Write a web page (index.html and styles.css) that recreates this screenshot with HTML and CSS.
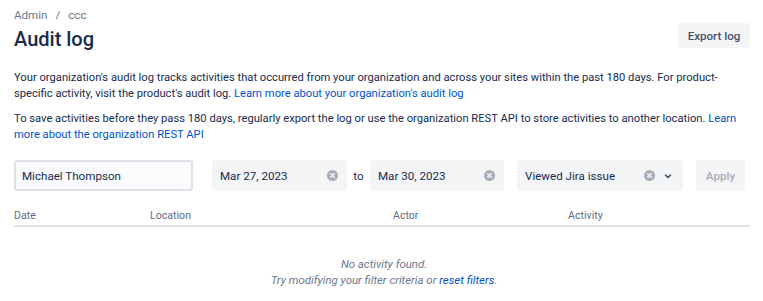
FILE: index.html
```html
<!DOCTYPE html>
<html>
<head>
<meta charset="utf-8">
<link rel="stylesheet" href="styles.css">
</head>
<body>
<div class="page">
  <div class="header">
    <div class="header-left">
      <nav class="crumbs"><span>Admin</span><span class="sep">/</span><span>ccc</span></nav>
      <h1 class="title">Audit log</h1>
    </div>
    <button class="btn export">Export log</button>
  </div>
  <p class="desc">Your organization's audit log tracks activities that occurred from your organization and across your sites within the past 180 days. For product-specific activity, visit the product's audit log. <a href="#">Learn more about your organization's audit log</a></p>
  <p class="desc second">To save activities before they pass 180 days, regularly export the log or use the organization REST API to store activities to another location. <a href="#">Learn more about the organization REST API</a></p>

  <div class="filters">
    <div class="field text-field">Michael Thompson</div>
    <div class="field date-field"><span>Mar 27, 2023</span>
      <svg class="clear" viewBox="0 0 12 12" width="11" height="11"><circle cx="6" cy="6" r="6" fill="#a5adba"/><path d="M4 4l4 4M8 4l-4 4" stroke="#f4f5f7" stroke-width="1.6" stroke-linecap="round"/></svg>
    </div>
    <span class="to">to</span>
    <div class="field date-field date2"><span>Mar 30, 2023</span>
      <svg class="clear" viewBox="0 0 12 12" width="11" height="11"><circle cx="6" cy="6" r="6" fill="#a5adba"/><path d="M4 4l4 4M8 4l-4 4" stroke="#f4f5f7" stroke-width="1.6" stroke-linecap="round"/></svg>
    </div>
    <div class="field select-field"><span>Viewed Jira issue</span>
      <span class="icons">
        <svg class="clear" viewBox="0 0 12 12" width="11" height="11"><circle cx="6" cy="6" r="6" fill="#a5adba"/><path d="M4 4l4 4M8 4l-4 4" stroke="#f4f5f7" stroke-width="1.6" stroke-linecap="round"/></svg>
        <svg class="chev" viewBox="0 0 10 10" width="10" height="10"><path d="M2.5 4l2.5 2.5L7.5 4" fill="none" stroke="#42526e" stroke-width="1.6" stroke-linecap="round" stroke-linejoin="round"/></svg>
      </span>
    </div>
    <button class="btn apply">Apply</button>
  </div>

  <div class="thead">
    <span>Date</span><span>Location</span><span>Actor</span><span>Activity</span>
  </div>

  <div class="empty">
    <div>No activity found.</div>
    <div>Try modifying your filter criteria or <a href="#">reset filters</a>.</div>
  </div>
</div>
</body>
</html>
```
FILE: styles.css
```css
* { box-sizing: border-box; }
body {
  margin: 0;
  background: #fff;
  font-family: Roboto, "Noto Sans", sans-serif;
  color: #172b4d;
  font-size: 11.2px;
}
.page { padding: 7px 13px 0 14px; }
.header { display: flex; justify-content: space-between; align-items: flex-start; }
.crumbs { color: #6b778c; font-size: 11.6px; line-height: 16px; display: flex; gap: 8px; }
.title { margin: 4px 0 0; font-size: 20px; font-weight: 500; line-height: 24px; color: #172b4d; }
.btn {
  font-family: inherit;
  border: 0;
  border-radius: 3px;
  background: #f4f5f7;
  font-size: 11.6px;
  font-weight: 500;
  color: #42526e;
  padding: 0 10px;
  height: 25px;
}
.export { margin-top: 16px; width: 72px; padding: 0; }
.desc { margin: 19px 0 0; line-height: 16px; }
.desc.second { margin-top: 9px; }
a { color: #0052cc; text-decoration: none; }
.filters { display: flex; align-items: center; margin-top: 17px; height: 31px; font-size: 11.6px; }
.field {
  height: 31px;
  border-radius: 3px;
  background: #f4f5f7;
  display: flex;
  align-items: center;
  justify-content: space-between;
  padding: 0 8px;
  color: #172b4d;
}
.text-field { width: 179px; background: #fafbfc; border: 2px solid #dfe1e6; padding-left: 6px; }
.date-field { width: 135px; margin-left: 19px; padding-right: 9px; }
.date2 { margin-left: 0; width: 134px; }
.to { width: 23px; text-align: center; }
.select-field { width: 166px; margin-left: 13px; padding-right: 10px; }
.icons { display: flex; align-items: center; gap: 8px; }
.chev { display: block; }
.clear { display: block; }
.apply { margin-left: 13px; height: 31px; width: 49px; color: #a5adba; padding: 0; }
.thead {
  display: grid;
  grid-template-columns: 136px 243px 175px 1fr;
  margin-top: 18px;
  padding-bottom: 2px;
  border-bottom: 2px solid #dfe1e6;
  font-size: 10.6px;
  color: #5e6c84;
  line-height: 14px;
}
.empty { text-align: center; font-style: italic; color: #6b778c; margin-top: 29px; line-height: 16px; padding-left: 4px; font-size: 11.4px; }
```
